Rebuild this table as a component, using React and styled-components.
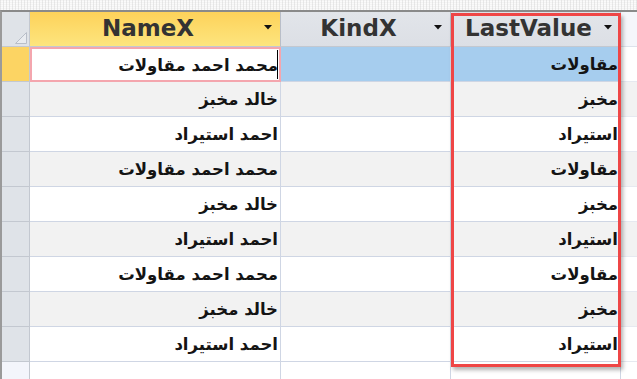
import React from "react";
import styled, { createGlobalStyle } from "styled-components";

const rows = [
  { name: "محمد احمد مقاولات", last: "مقاولات" },
  { name: "خالد مخبز", last: "مخبز" },
  { name: "احمد استيراد", last: "استيراد" },
  { name: "محمد احمد مقاولات", last: "مقاولات" },
  { name: "خالد مخبز", last: "مخبز" },
  { name: "احمد استيراد", last: "استيراد" },
  { name: "محمد احمد مقاولات", last: "مقاولات" },
  { name: "خالد مخبز", last: "مخبز" },
  { name: "احمد استيراد", last: "استيراد" },
];

function Arrow() {
  return (
    <ArrowIcon width="8" height="5" viewBox="0 0 8 5">
      <path d="M0 0 H8 L4 4.5 Z" fill="#111" />
    </ArrowIcon>
  );
}

function App() {
  return (
    <>
      <GlobalStyle />
      <Page>
        <TopBand />
        <Sheet>
          <HeaderRow>
            <Corner>
              <svg width="12" height="12" viewBox="0 0 12 12">
                <path d="M11.5 0.5 V11.5 H0.5 Z" fill="#e9ecf0" stroke="#b8bec8" />
              </svg>
            </Corner>
            <HeadCell $w={251} $active>
              <HeadText>NameX</HeadText>
              <Arrow />
            </HeadCell>
            <HeadCell $w={170}>
              <HeadText>KindX</HeadText>
              <Arrow />
            </HeadCell>
            <HeadCell $w={170}>
              <HeadText>LastValue</HeadText>
              <Arrow />
            </HeadCell>
            <FillerHead />
          </HeaderRow>
          {rows.map((r, i) => (
            <Row key={i} $alt={i % 2 === 1}>
              <Selector $current={i === 0} />
              <Cell $w={251} $editing={i === 0}>
                {r.name}
                {i === 0 && <Caret />}
              </Cell>
              <Cell $w={170} $selected={i === 0} />
              <Cell $w={170} $selected={i === 0}>
                {r.last}
              </Cell>
              <Filler />
            </Row>
          ))}
          <Row $new>
            <Selector $new />
            <Cell $w={251} />
            <Cell $w={170} />
            <Cell $w={170} />
            <Filler />
          </Row>
          <Highlight />
        </Sheet>
      </Page>
    </>
  );
}

export default App;

///////////////////////////////////////////////////////////////////////////
//////  STYLED COMPONENTS

const GlobalStyle = createGlobalStyle`
  html, body {
    margin: 0;
    padding: 0;
    background: #ffffff;
    overflow: hidden;
  }
`;

const Page = styled.div`
  width: 637px;
  height: 379px;
  display: flex;
  flex-direction: column;
  overflow: hidden;
`;

const TopBand = styled.div`
  height: 10px;
  flex-shrink: 0;
  background-color: #f4f4f4;
  background-image: repeating-linear-gradient(
      90deg,
      rgba(200, 200, 200, 0.35) 0 1px,
      transparent 1px 3px
    ),
    repeating-linear-gradient(
      0deg,
      rgba(255, 255, 255, 0.6) 0 1px,
      transparent 1px 2px
    );
`;

const Sheet = styled.div`
  position: relative;
  flex: 1;
  border-top: 2px solid #8a8a8a;
  border-left: 2px solid #9a9a9a;
  background: #ffffff;
  font-family: "DejaVu Sans", sans-serif;
`;

const HeaderRow = styled.div`
  display: flex;
  height: 35px;
`;

const Corner = styled.div`
  width: 28px;
  flex-shrink: 0;
  box-sizing: border-box;
  background: #dfe3e8;
  border-right: 1px solid #c3c8d0;
  border-bottom: 1px solid #c3c8d0;
  display: flex;
  align-items: flex-end;
  justify-content: flex-end;
  padding: 0 2px 2px 0;
`;

const HeadCell = styled.div`
  width: ${(p) => p.$w}px;
  flex-shrink: 0;
  box-sizing: border-box;
  display: flex;
  align-items: center;
  padding: 0 8px 0 0;
  border-right: 1px solid #b9bec8;
  border-bottom: 1px solid #c3c8d0;
  background: ${(p) =>
    p.$active
      ? "linear-gradient(to bottom, #fdd25a, #fde57e)"
      : "linear-gradient(to bottom, #e2e5ea, #dcdfe5)"};
`;

const HeadText = styled.span`
  flex: 1;
  text-align: center;
  font-family: "DejaVu Sans", sans-serif;
  font-weight: bold;
  font-size: 23px;
  color: #333333;
  padding-left: 8px;
  padding-right: 6px;
  margin-top: -2px;
`;

const ArrowIcon = styled.svg`
  flex-shrink: 0;
  margin-top: -4px;
`;

const FillerHead = styled.div`
  flex: 1;
  background: #f5f6fb;
  border-bottom: 1px solid #dde2ec;
`;

const Row = styled.div`
  display: flex;
  height: 35px;
  background: ${(p) => (p.$alt ? "#f2f2f2" : "#ffffff")};
`;

const Selector = styled.div`
  width: 28px;
  flex-shrink: 0;
  box-sizing: border-box;
  background: ${(p) => (p.$current ? "#fcd463" : p.$new ? "#f3f5fb" : "#dfe3e8")};
  border-right: 1px solid #c3c8d0;
  border-bottom: 1px solid ${(p) => (p.$new ? "#eef0f6" : "#c3c8d0")};
`;

const Cell = styled.div`
  position: relative;
  width: ${(p) => p.$w}px;
  flex-shrink: 0;
  box-sizing: border-box;
  display: flex;
  align-items: center;
  justify-content: flex-end;
  padding: 1px 2px 0 0;
  font-family: "DejaVu Sans", sans-serif;
  font-weight: bold;
  font-size: 16.5px;
  color: #141414;
  white-space: nowrap;
  overflow: hidden;
  border-right: 1px solid #cfd6e4;
  border-bottom: 1px solid #cfd6e4;
  background: ${(p) => (p.$editing ? "#ffffff" : p.$selected ? "#a6cdee" : "transparent")};
  ${(p) =>
    p.$editing &&
    `
    border: 2px solid #f4a6ae;
    padding-right: 1px;
  `}
`;

const Caret = styled.span`
  position: absolute;
  right: 1px;
  top: 1px;
  bottom: 1px;
  width: 1px;
  background: #000000;
`;

const Filler = styled.div`
  flex: 1;
  border-bottom: 1px solid #e6e9f0;
`;

const Highlight = styled.div`
  position: absolute;
  left: 449px;
  top: 1px;
  width: 170px;
  height: 354px;
  box-sizing: border-box;
  border: 3px solid #ef4646;
  box-shadow: 2px 3px 4px rgba(0, 0, 0, 0.3);
  pointer-events: none;
`;
